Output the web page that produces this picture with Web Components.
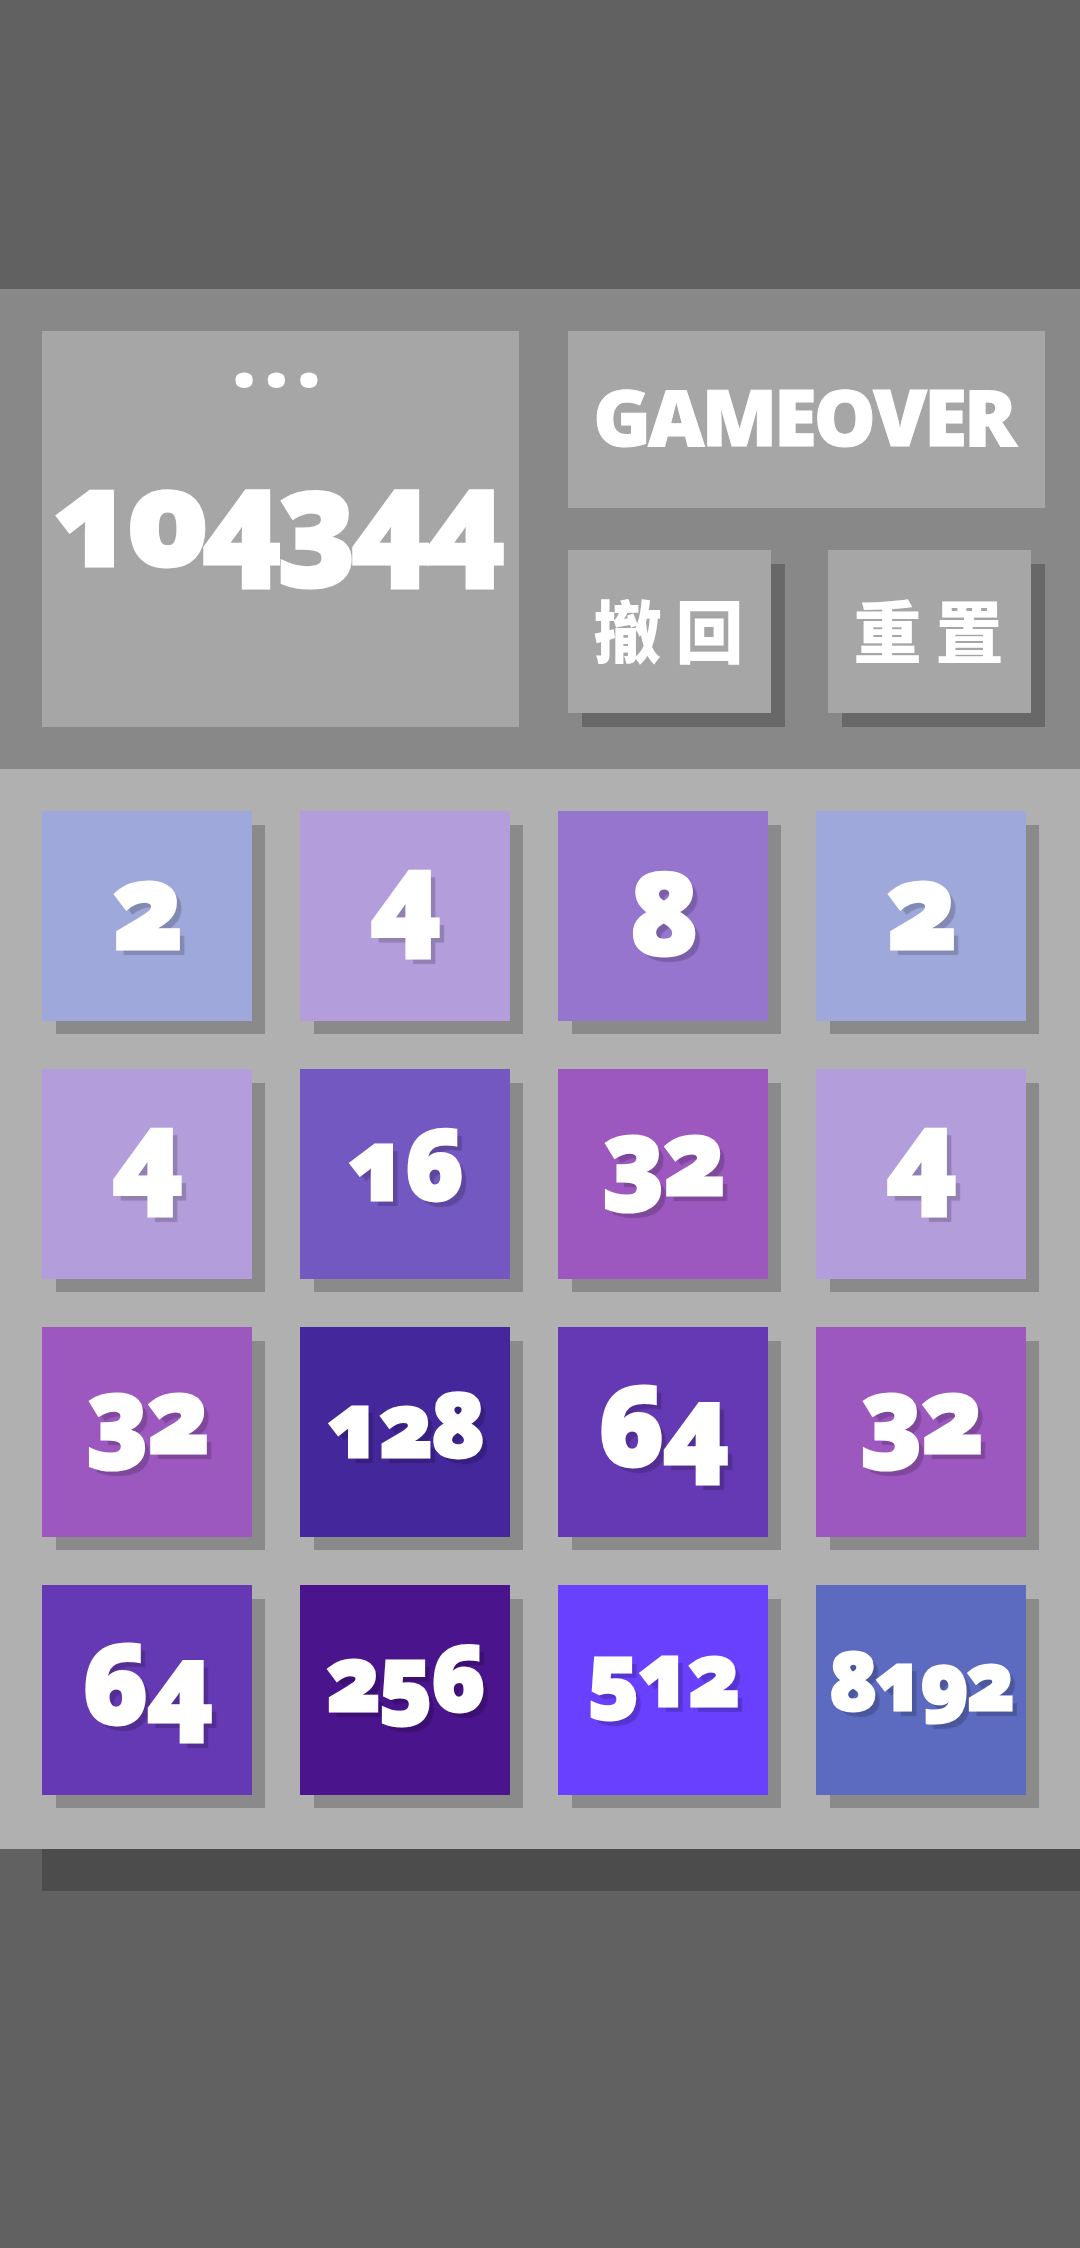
<!DOCTYPE html>
<html><head><meta charset="utf-8"><style>
html,body{margin:0;padding:0;background:#616161;}
body{width:1080px;height:2248px;overflow:hidden;font-family:"Open Sans","Noto Sans CJK SC",sans-serif;color:#fff;}
</style></head><body>
<game-app></game-app>
<template id="t-app"><style>
:host{display:block;padding-top:289px;}
.head{height:396px;padding:42px 35px 42px 42px;background:#888;display:flex;gap:49px;}
.right{width:477px;display:flex;flex-direction:column;gap:42px;}
.btns{display:flex;gap:57px;}
.grid{background:#b0b0b0;height:996px;padding:42px 0 42px 42px;display:grid;grid-template-columns:repeat(4,210px);grid-auto-rows:210px;column-gap:48px;row-gap:48px;}
.under{height:42px;margin-left:42px;background:#4c4c4c;}
</style>
<div class="head"><score-box value="104344"></score-box><div class="right"><status-box>GAMEOVER</status-box><div class="btns"><action-btn>撤回</action-btn><action-btn>重置</action-btn></div></div></div>
<div class="grid" id="g"></div><div class="under"></div>
</template>
<template id="t-score"><style>
:host{display:flex;flex-direction:column;align-items:center;width:477px;height:396px;background:#a6a6a6;box-sizing:border-box;}
.d{font-weight:800;font-size:84px;line-height:64px;height:64px;letter-spacing:8px;margin-top:-8px;}
.v{font-weight:800;font-size:133px;line-height:133px;margin-top:61px;padding-right:8px;font-variant-numeric:oldstyle-nums;letter-spacing:-6px;white-space:nowrap;-webkit-text-stroke:3px #fff;}
</style><div class="d">...</div><div class="v"></div></template>
<template id="t-status"><style>
:host{display:flex;align-items:center;justify-content:center;height:177px;background:#a6a6a6;font-weight:800;font-size:78px;}
span{margin-top:-8px;padding-right:6px;letter-spacing:-3px;-webkit-text-stroke:1px #fff;}
</style><span><slot></slot></span></template>
<template id="t-btn"><style>
:host{display:flex;align-items:center;justify-content:center;width:203px;height:163px;background:#a6a6a6;box-shadow:14px 14px 0 #686868;font-family:"Noto Sans CJK SC",sans-serif;font-weight:900;font-size:68px;letter-spacing:14px;}
span{margin-top:-6px;padding-left:12px;}
</style><span><slot></slot></span></template>
<template id="t-tile"><style>
:host{display:flex;align-items:center;justify-content:center;width:210px;height:210px;background:var(--c);box-shadow:13.5px 13.5px 0 -.5px #8a8a8a;}
span{font-weight:800;font-size:var(--s);line-height:1;font-variant-numeric:oldstyle-nums;text-shadow:6px 6px 1px rgba(0,0,0,.18);letter-spacing:-2px;white-space:nowrap;-webkit-text-stroke:3px #fff;margin-top:var(--m);}
</style><span></span></template>
<script>
function def(n,t,init){customElements.define(n,class extends HTMLElement{constructor(){super();this.attachShadow({mode:"open"}).appendChild(document.getElementById(t).content.cloneNode(true));}connectedCallback(){init&&init.call(this);}});}
def("score-box","t-score",function(){this.shadowRoot.querySelector(".v").textContent=this.getAttribute("value");});
def("status-box","t-status");
def("action-btn","t-btn");
const C={2:"#9fa8da",4:"#b39ddb",8:"#9575cd",16:"#7258c0",32:"#9c58bf",64:"#6539b3",128:"#43279b",256:"#4a148c",512:"#6a40ff",8192:"#5c6bc0"};
const S={2:[118,-24],4:[118,-46],8:[114,-10],16:[98,-24],32:[104,-38],64:[110,-19],128:[89,-20],256:[90,-28],512:[86,-34],8192:[79,-22]};
def("game-tile","t-tile",function(){const v=this.getAttribute("value");this.style.setProperty("--c",C[v]);this.style.setProperty("--s",S[v][0]+"px");this.style.setProperty("--m",S[v][1]+"px");this.shadowRoot.querySelector("span").textContent=v;});
def("game-app","t-app",function(){const g=this.shadowRoot.getElementById("g");[2,4,8,2,4,16,32,4,32,128,64,32,64,256,512,8192].forEach(v=>{const t=document.createElement("game-tile");t.setAttribute("value",v);g.appendChild(t);});});
</script></body></html>
